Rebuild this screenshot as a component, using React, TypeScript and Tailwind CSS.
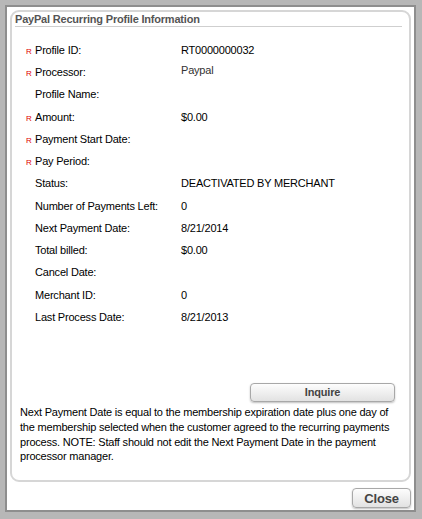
const rows: { label: string; value: string; required?: boolean; muted?: boolean }[] = [
  { label: 'Profile ID:', value: 'RT0000000032', required: true },
  { label: 'Processor:', value: 'Paypal', required: true, muted: true },
  { label: 'Profile Name:', value: '' },
  { label: 'Amount:', value: '$0.00', required: true },
  { label: 'Payment Start Date:', value: '', required: true },
  { label: 'Pay Period:', value: '', required: true },
  { label: 'Status:', value: 'DEACTIVATED BY MERCHANT' },
  { label: 'Number of Payments Left:', value: '0' },
  { label: 'Next Payment Date:', value: '8/21/2014' },
  { label: 'Total billed:', value: '$0.00' },
  { label: 'Cancel Date:', value: '' },
  { label: 'Merchant ID:', value: '0' },
  { label: 'Last Process Date:', value: '8/21/2013' },
];

export default function App() {
  return (
    <div className="w-[422px] h-[519px] bg-[#b7b7b7] pt-[5px] pl-[5px] pr-[6px] pb-[7px] text-[11px] tracking-[-0.2px] text-black font-['Liberation_Sans',Arial,sans-serif]">
      <div className="h-full border-2 border-[#8e8e8e] bg-white p-[3px] pb-[2px] flex flex-col">
        {/* Fieldset panel */}
        <div className="h-[472px] border-2 border-[#d6d6d6] rounded-[9px] px-[2px] flex flex-col">
          <div className="mr-[5px] ml-[1px] h-[15px] border-b border-[#cfcfcf] font-bold text-[#555] leading-[14px] text-[11px]">
            PayPal Recurring Profile Information
          </div>

          <div className="mt-[12px] flex flex-col">
            {rows.map((row) => (
              <div key={row.label} className="h-[22.25px] flex items-center">
                <div className="w-[21px] pl-[12px] self-start pt-[3px]">
                  {row.required && <span className="text-[8px] leading-none text-[#e00000]">R</span>}
                </div>
                <div className="w-[146px]">{row.label}</div>
                <div className={row.muted ? 'text-[#333] -mt-[5px]' : ''}>{row.value}</div>
              </div>
            ))}
          </div>

          <div className="mt-[55px] flex justify-end pr-[12px]">
            <button
              type="button"
              className="w-[145px] h-[19px] rounded-[4px] border border-[#a8a8a8] bg-gradient-to-b from-[#fdfdfd] to-[#e2e2e2] shadow-[0_1px_2px_rgba(0,0,0,0.25)] font-bold text-[#444] text-[11px] leading-none"
            >
              Inquire
            </button>
          </div>

          <p className="mt-[3px] pl-[6px] pr-[4px] leading-[14.7px]">
            Next Payment Date is equal to the membership expiration date plus one day of the membership selected when
            the customer agreed to the recurring payments process. NOTE: Staff should not edit the Next Payment Date in
            the payment processor manager.
          </p>
        </div>

        <div className="mt-[6px] flex justify-end">
          <button
            type="button"
            className="w-[59px] h-[20px] rounded-[4px] border border-[#a8a8a8] bg-gradient-to-b from-[#fdfdfd] to-[#e2e2e2] shadow-[0_1px_2px_rgba(0,0,0,0.25)] font-bold text-[#444] text-[13px] leading-none"
          >
            Close
          </button>
        </div>
      </div>
    </div>
  );
}
